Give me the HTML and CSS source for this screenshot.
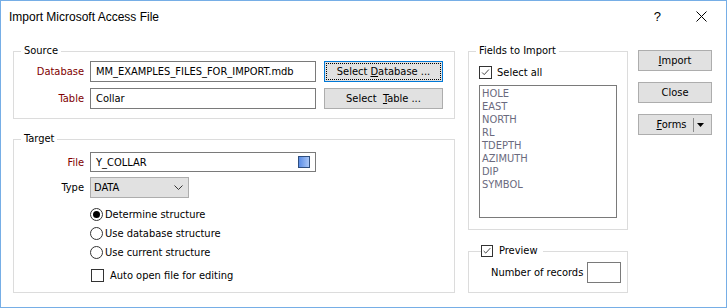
FILE: index.html
```html
<!DOCTYPE html>
<html>
<head>
<meta charset="utf-8">
<link rel="stylesheet" href="styles.css">
</head>
<body>
<div class="window">
  <div class="titlebar">
    <span class="title">Import Microsoft Access File</span>
    <span class="help">?</span>
    <svg class="close" viewBox="0 0 11 11"><path d="M0.5 0.5L10.5 10.5M10.5 0.5L0.5 10.5" stroke="#000" stroke-width="1" fill="none"/></svg>
  </div>
  <div class="content">
    <div class="col-left">
      <fieldset class="group source">
        <legend>Source</legend>
        <div class="row">
          <span class="lbl req">Database</span>
          <div class="input wide">MM_EXAMPLES_FILES_FOR_IMPORT.mdb</div>
          <button class="btn sel focus"><span>Select <u>D</u>atabase ...</span></button>
        </div>
        <div class="row">
          <span class="lbl req">Table</span>
          <div class="input wide">Collar</div>
          <button class="btn sel"><span>Select&nbsp; <u>T</u>able ...</span></button>
        </div>
      </fieldset>
      <fieldset class="group target">
        <legend>Target</legend>
        <div class="row file-row">
          <span class="lbl req">File</span>
          <div class="input wide file-input"><span>Y_COLLAR</span><span class="blue-sq"></span></div>
        </div>
        <div class="row type-row">
          <span class="lbl">Type</span>
          <div class="select"><span>DATA</span><svg class="chev" viewBox="0 0 9 5"><path d="M0.5 0.5L4.5 4.5L8.5 0.5" stroke="#333" fill="none"/></svg></div>
        </div>
        <div class="radios">
          <div class="radio-row"><span class="radio on"></span><span>Determine structure</span></div>
          <div class="radio-row"><span class="radio"></span><span>Use database structure</span></div>
          <div class="radio-row"><span class="radio"></span><span>Use current structure</span></div>
        </div>
        <div class="check-row auto"><span class="cb"></span><span>Auto open file for editing</span></div>
      </fieldset>
    </div>
    <div class="col-mid">
      <fieldset class="group fields">
        <legend class="fields-legend">Fields to Import</legend>
        <div class="check-row selall"><span class="cb"><svg viewBox="0 0 13 13"><path d="M2.5 6.5L5 9L10.5 3" stroke="#222" fill="none"/></svg></span><span>Select all</span></div>
        <div class="listbox">
          <div>HOLE</div>
          <div>EAST</div>
          <div>NORTH</div>
          <div>RL</div>
          <div>TDEPTH</div>
          <div>AZIMUTH</div>
          <div>DIP</div>
          <div>SYMBOL</div>
        </div>
      </fieldset>
      <fieldset class="group preview">
        <legend class="cb-legend"><span class="cb small"><svg viewBox="0 0 12 12"><path d="M2 6L4.5 8.5L10 2.5" stroke="#222" fill="none"/></svg></span><span>Preview</span></legend>
        <div class="records-row">
          <span>Number of records</span>
          <div class="input small-input"></div>
        </div>
      </fieldset>
    </div>
    <div class="col-btns">
      <button class="btn side"><span><u>I</u>mport</span></button>
      <button class="btn side"><span>Close</span></button>
      <button class="btn side split"><span class="split-label"><u>F</u>orms</span><span class="split-sep"></span><svg class="split-arrow" viewBox="0 0 7 4"><path d="M0 0H7L3.5 4Z" fill="#000"/></svg></button>
    </div>
  </div>
</div>
</body>
</html>
```

FILE: styles.css
```css
html, body {
  margin: 0;
  padding: 0;
  background: #fff;
}

.window {
  width: 727px;
  height: 308px;
  box-sizing: border-box;
  border: 1px solid #76aee6;
  background: #fff;
  font-family: "DejaVu Sans Condensed", "DejaVu Sans", sans-serif;
  font-size: 11px;
  color: #000;
  overflow: hidden;
}

.titlebar {
  height: 31px;
  display: flex;
  align-items: center;
  padding-left: 8px;
  font-family: "Liberation Sans", Arial, sans-serif;
  font-size: 12px;
}

.help {
  margin-left: auto;
  font-size: 13px;
}

.close {
  width: 11px;
  height: 11px;
  margin-left: 35px;
  margin-right: 19px;
}

.content {
  display: flex;
  align-items: flex-start;
  padding: 12px 0 0 12px;
}

.col-left {
  width: 442px;
  display: flex;
  flex-direction: column;
}

.col-mid {
  width: 160px;
  margin-left: 13px;
  display: flex;
  flex-direction: column;
}

.col-btns {
  width: 74px;
  margin-left: 10px;
  margin-top: 6px;
  display: flex;
  flex-direction: column;
}

.group {
  margin: 0;
  border: 1px solid #dcdcdc;
  padding: 0;
  min-width: 0;
}

.group > legend {
  margin-left: 7px;
  padding: 0 3px;
  height: 14px;
  line-height: 14px;
}

.source {
  padding: 3px 0 9px 0;
}

.row {
  display: flex;
  align-items: center;
  height: 21px;
}

.row + .row {
  margin-top: 6px;
}

.lbl {
  width: 70px;
  margin-right: 6px;
  text-align: right;
  flex: none;
}

.req {
  color: #800000;
}

.input {
  box-sizing: border-box;
  height: 21px;
  border: 1px solid #7a7a7a;
  background: #fff;
  padding-left: 5px;
  display: flex;
  align-items: center;
  flex: none;
}

.wide {
  width: 226px;
}

.btn {
  box-sizing: border-box;
  height: 21px;
  padding: 0;
  margin: 0;
  background: #e1e1e1;
  border: 1px solid #adadad;
  font-family: inherit;
  font-size: 11px;
  color: #000;
  display: flex;
  align-items: center;
  justify-content: center;
}

.sel {
  width: 119px;
  margin-left: 8px;
}

.focus {
  border-color: #0078d7;
  outline: 1px dotted #000;
  outline-offset: -3px;
}

u {
  text-decoration: underline;
  text-underline-offset: 1px;
}

.target {
  margin-top: 13px;
  padding: 6px 0 7px 0;
}

.target .file-row {
  height: 20px;
}

.file-input {
  height: 20px;
  justify-content: space-between;
  padding-right: 5px;
}

.blue-sq {
  width: 12px;
  height: 12px;
  box-sizing: border-box;
  border: 1px solid #2f4f7f;
  background: linear-gradient(to right, #5b8de6, #a9c6f6);
}

.target .type-row {
  margin-top: 5px;
}

.select {
  box-sizing: border-box;
  width: 99px;
  height: 21px;
  border: 1px solid #adadad;
  background: #e1e1e1;
  padding: 0 5px 0 3px;
  display: flex;
  align-items: center;
  justify-content: space-between;
}

.chev {
  width: 9px;
  height: 5px;
}

.radios {
  margin-top: 7px;
  padding-left: 76px;
}

.radio-row {
  height: 19px;
  display: flex;
  align-items: center;
}

.radio {
  width: 13px;
  height: 13px;
  box-sizing: border-box;
  border: 1px solid #333;
  border-radius: 50%;
  margin-right: 2px;
  display: flex;
  align-items: center;
  justify-content: center;
  flex: none;
}

.radio.on::after {
  content: "";
  width: 7px;
  height: 7px;
  border-radius: 50%;
  background: #000;
}

.check-row {
  display: flex;
  align-items: center;
}

.cb {
  width: 13px;
  height: 13px;
  box-sizing: border-box;
  border: 1px solid #333;
  background: #fff;
  flex: none;
  display: flex;
}

.cb svg {
  width: 100%;
  height: 100%;
}

.cb.small {
  width: 12px;
  height: 12px;
  margin-right: 6px;
}

.auto {
  height: 20px;
  margin-top: 3px;
  padding-left: 77px;
}

.auto .cb {
  margin-right: 6px;
}

.fields {
  padding: 6px 0 11px 10px;
}

.group > .fields-legend {
  margin-left: -3px;
}

.selall {
  height: 16px;
}

.selall .cb {
  margin-right: 5px;
}

.listbox {
  box-sizing: border-box;
  width: 138px;
  height: 133px;
  margin-top: 5px;
  border: 1px solid #7a7a7a;
  padding: 1px 0 0 2px;
  color: #6a6a7e;
  line-height: 13px;
}

.preview {
  margin-top: 14px;
  padding: 4px 6px 9px 22px;
}

.group > .cb-legend {
  margin-left: -10px;
  padding: 0 6px 0 0;
  display: flex;
  align-items: center;
}

.records-row {
  height: 21px;
  display: flex;
  align-items: center;
  justify-content: space-between;
}

.small-input {
  width: 34px;
}

.side {
  width: 74px;
}

.side + .side {
  margin-top: 11px;
}

.split {
  justify-content: flex-start;
  padding-left: 17px;
}

.split-label {
  width: 31px;
}

.split-sep {
  width: 1px;
  height: 14px;
  background: #8a8a8a;
  margin-left: 6px;
}

.split-arrow {
  width: 7px;
  height: 4px;
  margin-left: 3px;
}
```
